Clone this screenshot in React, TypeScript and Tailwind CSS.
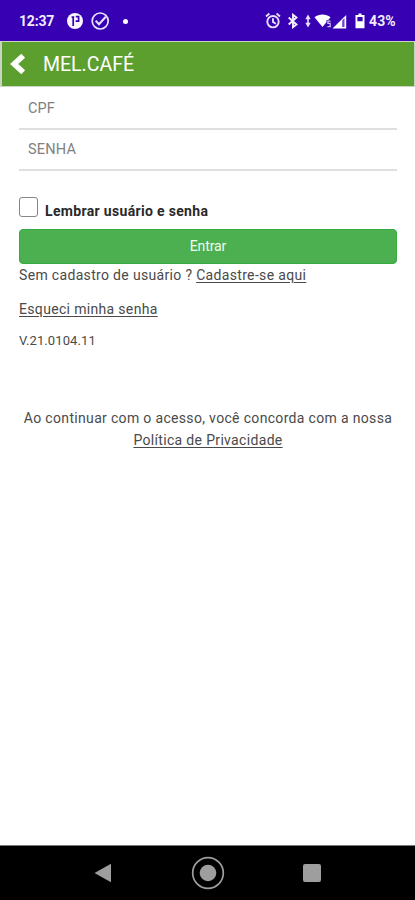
import React from "react";

function StatusBar() {
  return (
    <div className="flex h-[41px] shrink-0 items-center bg-[#3700b3] pl-[19px] pr-[18px] pt-px text-[14px] font-bold text-[#f1edff]">
      <span className="w-[48px] whitespace-nowrap tracking-[-0.2px]">12:37</span>
      <svg width="18" height="18" viewBox="0 0 18 18" className="shrink-0">
        <circle cx="8" cy="9" r="8" fill="#f8f6ff" />
        <path d="M6.2 14V5.2M4.6 5.2h2.6M8.8 4.6h2.8v4.6H8.6" fill="none" stroke="#3700b3" strokeWidth="1.7" />
      </svg>
      <svg width="20" height="20" viewBox="0 0 20 20" className="ml-[5px] shrink-0" fill="none" stroke="#e8e0ff" strokeWidth="1.7">
        <circle cx="10.2" cy="10" r="8" />
        <path d="M5.7 9.8l3.3 3.4 6.8-7.4" strokeWidth="2" />
      </svg>
      <span className="ml-[13px] h-[5px] w-[5px] rounded-full bg-white" />
      <div className="ml-auto flex items-center">
        <svg width="16" height="18" viewBox="0 0 16 18" fill="none" stroke="#e8e0ff" strokeWidth="1.9">
          <circle cx="8" cy="9.7" r="5.7" />
          <path d="M1 4.4L4.4 1.6M15 4.4L11.6 1.6M8 6.2v3.7l2.8 1.8" />
        </svg>
        <svg width="12" height="16" viewBox="0 0 12 16" className="ml-[6px]" fill="none" stroke="#f1edff" strokeWidth="1.9">
          <path d="M1.7 4.5l7.8 7L6 14.2V1.8l3.5 2.7-7.8 7" />
        </svg>
        <svg width="6" height="14" viewBox="0 0 6 14" className="ml-[6px]" fill="#e8e0ff">
          <path d="M3 .5l2.7 4.8H.3zM3 13.5L.3 8.7h5.4zM2.2 4h1.6v6H2.2z" />
        </svg>
        <svg width="18" height="16" viewBox="0 0 18 16" className="ml-[3px]">
          <path d="M.5 4.3C5 .7 12 .7 16.5 4.3L8.5 14z" fill="#fff" />
          <path d="M16.5 8.2h-2.6v2.2h2.3v3.2H13.5" fill="none" stroke="#3700b3" strokeWidth="2.6" />
          <path d="M16.5 8.2h-2.6v2.2h2.3v3.2H13.5" fill="none" stroke="#cfc0f5" strokeWidth="1.2" />
        </svg>
        <svg width="15" height="15" viewBox="0 0 15 15">
          <path d="M.5 14.5L14.2 1v13.5z" fill="#fff" />
          <path d="M10.2 6.4l2.3-2.3v9h-2.3z" fill="#6f46c9" />
        </svg>
        <svg width="10" height="16" viewBox="0 0 10 16" className="ml-[8px]">
          <path d="M.5 2h3V.5h3V2h3v13.3h-9z" fill="#fff" />
          <path d="M2.4 4h5.2v4.2H2.4z" fill="#3700b3" />
        </svg>
        <span className="ml-[4px] w-[28px] whitespace-nowrap text-[14px] tracking-[0.1px]">43%</span>
      </div>
    </div>
  );
}

function Header() {
  return (
    <header className="flex h-[46px] shrink-0 items-center border-b border-l-2 border-r border-t border-[#c9d4c4] bg-[#5c9f2f] pl-[8px] text-white">
      <svg width="16" height="24" viewBox="0 0 16 24" fill="none" stroke="white" strokeWidth="5.6">
        <path d="M13.2 3.8L4.2 12l9 8.2" />
      </svg>
      <h1 className="ml-[17px] pt-[2px] text-[19.5px] leading-[24px]">MEL.CAFÉ</h1>
    </header>
  );
}

export default function App() {
  return (
    <div className="flex h-[900px] w-[415px] flex-col overflow-hidden bg-white font-[Roboto,sans-serif] text-[14px] tracking-[0.33px] text-[#4a4a4a]">
      <div className="shrink-0 tracking-normal">
        <StatusBar />
        <Header />
      </div>
      <main className="flex flex-1 flex-col pl-[19px] pr-[18px]">
        <input
          placeholder="CPF"
          aria-label="CPF"
          className="h-[43px] border-b-2 border-[#dfdfdf] pl-[9px] pt-[2px] text-[14.5px] tracking-[0.1px] outline-none placeholder:text-[#808080]"
        />
        <input
          type="password"
          placeholder="SENHA"
          aria-label="SENHA"
          className="h-[41px] border-b-2 border-[#dfdfdf] pl-[9px] text-[14.5px] tracking-[0.2px] outline-none placeholder:text-[#808080]"
        />
        <label className="mt-[26px] flex h-[32px] items-start font-bold text-[#292929]">
          <input type="checkbox" className="h-[20px] w-[19px] appearance-none rounded-[3px] border-[1.5px] border-[#868686] bg-white" />
          <span className="ml-[7px] mt-[4px] leading-[20px]">Lembrar usuário e senha</span>
        </label>
        <button className="h-[35px] rounded-[4px] border border-[#38ab40] bg-[#4caf50] text-[14px] tracking-[-0.1px] text-[#f0fff0]">
          Entrar
        </button>
        <p className="mt-px whitespace-nowrap leading-[20px]">
          Sem cadastro de usuário ? <a className="underline underline-offset-2">Cadastre-se aqui</a>
        </p>
        <p className="mt-[14px] leading-[20px]">
          <a className="underline underline-offset-2">Esqueci minha senha</a>
        </p>
        <p className="mt-[12px] text-[13px] leading-[20px] tracking-[0.1px]">V.21.0104.11</p>
        <p className="mt-[56px] whitespace-nowrap text-center leading-[22px]">
          Ao continuar com o acesso, você concorda com a nossa
          <br />
          <a className="underline underline-offset-2">Política de Privacidade</a>
        </p>
      </main>
      <nav className="flex h-[55px] shrink-0 items-center justify-between border-t border-[#777] bg-black pl-[94px] pr-[94px]">
        <svg width="18" height="20" viewBox="0 0 18 20" fill="#9e9e9e">
          <path d="M.5 10L17 .7v18.6z" />
        </svg>
        <svg width="34" height="34" viewBox="0 0 34 34">
          <circle cx="17" cy="17" r="15.3" fill="none" stroke="#9e9e9e" strokeWidth="1.7" />
          <circle cx="17" cy="17" r="8.3" fill="#9e9e9e" />
        </svg>
        <span className="h-[18px] w-[18px] rounded-[2px] bg-[#9e9e9e]" />
      </nav>
    </div>
  );
}
